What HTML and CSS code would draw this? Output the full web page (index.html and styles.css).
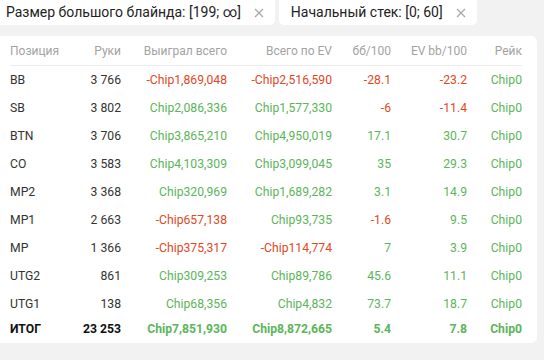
FILE: index.html
```html
<!DOCTYPE html>
<html lang="ru">
<head>
<meta charset="utf-8">
<link rel="stylesheet" href="styles.css">
</head>
<body>
<div class="wrap">
  <div class="filters">
    <div class="chip"><span>Размер большого блайнда: [199; ∞]</span><svg class="x" viewBox="0 0 10 10" width="10" height="10"><path d="M1 1L9 9M9 1L1 9"/></svg></div>
    <div class="chip"><span>Начальный стек: [0; 60]</span><svg class="x" viewBox="0 0 10 10" width="10" height="10"><path d="M1 1L9 9M9 1L1 9"/></svg></div>
  </div>
  <div class="card">
    <table class="stats">
      <colgroup>
        <col class="c-pos"><col class="c-hands"><col class="c-won"><col class="c-ev"><col class="c-bb"><col class="c-evbb"><col class="c-rake">
      </colgroup>
      <thead>
        <tr><th class="l">Позиция</th><th>Руки</th><th>Выиграл всего</th><th>Всего по EV</th><th>бб/100</th><th>EV bb/100</th><th>Рейк</th></tr>
      </thead>
      <tbody>
        <tr><td class="l">BB</td><td>3 766</td><td class="neg">-Chip1,869,048</td><td class="neg">-Chip2,516,590</td><td class="neg">-28.1</td><td class="neg">-23.2</td><td class="pos">Chip0</td></tr>
        <tr><td class="l">SB</td><td>3 802</td><td class="pos">Chip2,086,336</td><td class="pos">Chip1,577,330</td><td class="neg">-6</td><td class="neg">-11.4</td><td class="pos">Chip0</td></tr>
        <tr><td class="l">BTN</td><td>3 706</td><td class="pos">Chip3,865,210</td><td class="pos">Chip4,950,019</td><td class="pos">17.1</td><td class="pos">30.7</td><td class="pos">Chip0</td></tr>
        <tr><td class="l">CO</td><td>3 583</td><td class="pos">Chip4,103,309</td><td class="pos">Chip3,099,045</td><td class="pos">35</td><td class="pos">29.3</td><td class="pos">Chip0</td></tr>
        <tr><td class="l">MP2</td><td>3 368</td><td class="pos">Chip320,969</td><td class="pos">Chip1,689,282</td><td class="pos">3.1</td><td class="pos">14.9</td><td class="pos">Chip0</td></tr>
        <tr><td class="l">MP1</td><td>2 663</td><td class="neg">-Chip657,138</td><td class="pos">Chip93,735</td><td class="neg">-1.6</td><td class="pos">9.5</td><td class="pos">Chip0</td></tr>
        <tr><td class="l">MP</td><td>1 366</td><td class="neg">-Chip375,317</td><td class="neg">-Chip114,774</td><td class="pos">7</td><td class="pos">3.9</td><td class="pos">Chip0</td></tr>
        <tr><td class="l">UTG2</td><td>861</td><td class="pos">Chip309,253</td><td class="pos">Chip89,786</td><td class="pos">45.6</td><td class="pos">11.1</td><td class="pos">Chip0</td></tr>
        <tr><td class="l">UTG1</td><td>138</td><td class="pos">Chip68,356</td><td class="pos">Chip4,832</td><td class="pos">73.7</td><td class="pos">18.7</td><td class="pos">Chip0</td></tr>
      </tbody>
      <tfoot>
        <tr><td class="l">ИТОГ</td><td>23 253</td><td class="pos">Chip7,851,930</td><td class="pos">Chip8,872,665</td><td class="pos">5.4</td><td class="pos">7.8</td><td class="pos">Chip0</td></tr>
      </tfoot>
    </table>
  </div>
</div>
</body>
</html>
```
FILE: styles.css
```css
html, body {
  margin: 0;
  padding: 0;
  background: #f2f2f2;
  font-family: Roboto, "Noto Sans", sans-serif;
  overflow: hidden;
}
.wrap {
  margin-left: -6px;
  width: 543px;
}
.filters {
  display: flex;
  gap: 4px;
  height: 25px;
}
.chip {
  display: flex;
  align-items: center;
  gap: 13px;
  background: #fff;
  border-radius: 0 0 5px 5px;
  padding: 0 11px 0 12px;
  font-size: 14px;
  color: #222;
  height: 25px;
}
.chip span {
  line-height: 25px;
}
.x {
  stroke: #a8a8a8;
  stroke-width: 1.2;
  fill: none;
}
.card {
  margin-top: 11px;
  background: #fff;
  border-radius: 6px;
  padding: 0 15px 3px 16px;
}
.stats {
  border-collapse: collapse;
  table-layout: fixed;
  width: 512px;
  font-size: 12.2px;
}
.c-pos { width: 60px; }
.c-hands { width: 51px; }
.c-won { width: 106px; }
.c-ev { width: 105px; }
.c-bb { width: 59px; }
.c-evbb { width: 76px; }
.c-rake { width: 55px; }
.stats th, .stats td {
  padding: 0;
  text-align: right;
  white-space: nowrap;
}
.stats .l { text-align: left; }
.stats th {
  font-weight: 400;
  font-size: 12px;
  color: #a3a3a3;
  height: 29px;
  border-bottom: 1px solid #ececec;
}
.stats tbody td {
  height: 28px;
  color: #333;
}
.stats tfoot td {
  height: 22px;
  font-weight: 700;
  color: #111;
}
.stats td.neg { color: #e2491f; }
.stats td.pos { color: #5cb65a; }
```
